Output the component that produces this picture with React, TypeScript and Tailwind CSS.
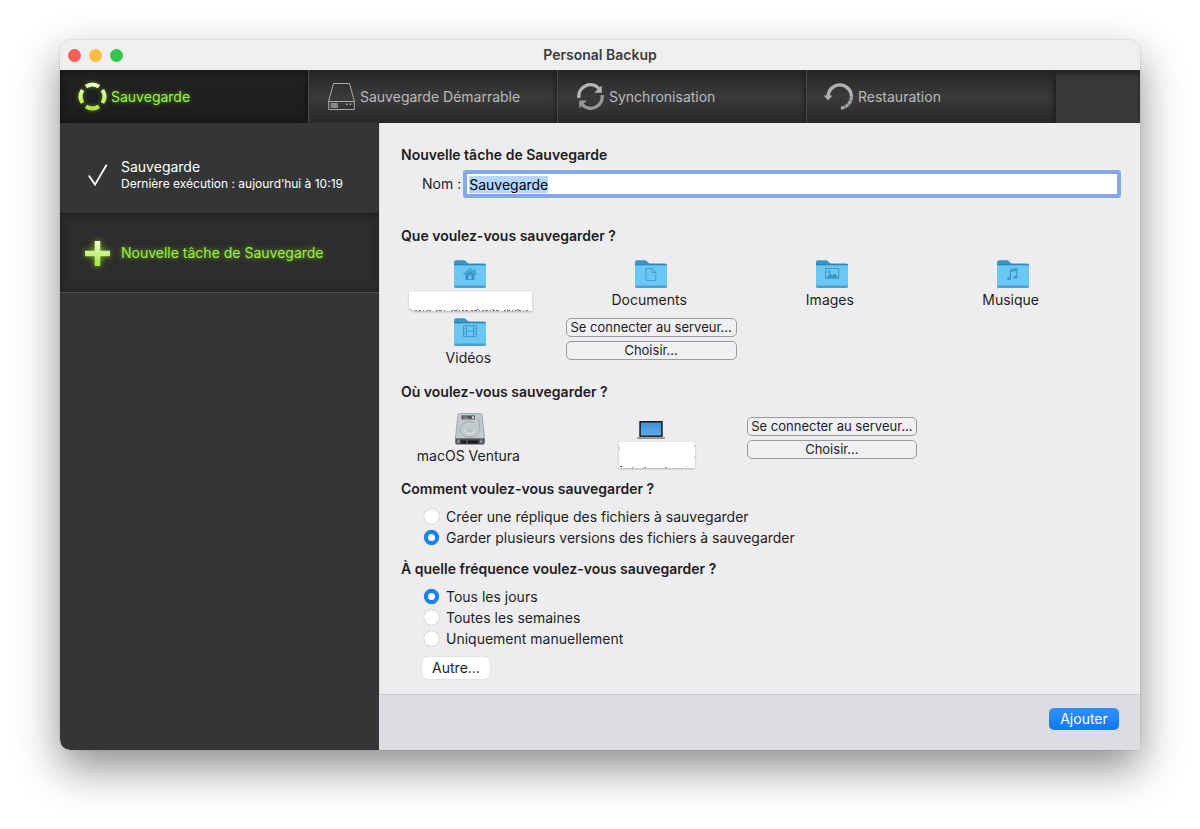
import { ReactNode, useEffect, useRef, useState } from "react";
import { clsx } from "clsx";

/* ---------- Toolbar icons ---------- */

const BackupIcon = () => (
  <svg width="27" height="27" viewBox="0 0 27 27" fill="none" className="shrink-0 overflow-visible drop-shadow-[0_0_2px_#4c9414]">
    <defs>
      <linearGradient id="ring" gradientUnits="userSpaceOnUse" x1="0" y1="0" x2="0" y2="27">
        <stop offset="0" stopColor="#f6ffd4" />
        <stop offset="1" stopColor="#b4e63c" />
      </linearGradient>
    </defs>
    <g stroke="url(#ring)" strokeWidth="4">
      <path d="M7 3.600A11.800 11.800 0 0 1 20 3.600" />
      <path d="M23.400 7A11.800 11.800 0 0 1 23.400 20" />
      <path d="M20 23.400A11.800 11.800 0 0 1 7 23.400" />
      <path d="M3.600 20A11.800 11.800 0 0 1 3.600 7" />
    </g>
  </svg>
);

const BootDriveIcon = () => (
  <svg width="27" height="27" viewBox="0 0 27 27" fill="none" stroke="#a9a9a9" className="shrink-0">
    <path d="M5.500.5h16l4.800 17.500v8.500H.7V18z" />
    <path d="M.7 18.500h25.600" />
    <path d="M3 20.500h6.500v4H3z" fill="#7b7b7b" stroke="#8a8a8a" />
    <path d="M5 20.500v4M7.500 20.500v4" opacity=".6" />
    <path d="M18 21.300h1.600M21.600 21.300h1.600" strokeWidth="1.600" />
  </svg>
);

const SyncIcon = () => (
  <svg width="27" height="27" viewBox="0 0 27 27" fill="none" className="shrink-0">
    <path d="M1.900 15A11.600 11.600 0 0 1 21.800 5.400" stroke="#b5b5b5" strokeWidth="3.400" />
    <path d="M24.800 2.400v7.400h-7.600z" fill="#b5b5b5" />
    <path d="M25.100 12A11.600 11.600 0 0 1 5.200 21.600" stroke="#979797" strokeWidth="3.400" />
    <path d="M2.200 25.200v-7.600h7.600z" fill="#979797" />
  </svg>
);

const RestoreIcon = () => (
  <svg width="27" height="27" viewBox="0 0 27 27" fill="none" className="shrink-0 overflow-visible">
    <path d="M2.200 13.500A11.600 11.600 0 0 1 25.400 13.500" stroke="#b0b0b0" strokeWidth="3.400" />
    <path d="M25.400 13.300A11.600 11.600 0 0 1 14.500 25.100" stroke="#a0a0a0" strokeWidth="3.400" strokeDasharray="4 .4" />
    <path d="M-2.400 12.400h8.800L2.200 17.600z" fill="#b0b0b0" />
  </svg>
);

/* ---------- Finder icons ---------- */

const Folder = ({ children }: { children: ReactNode }) => (
  <svg width="32" height="30" viewBox="0 0 32 30" fill="none">
    <path d="M0 2.200Q0 .3 2 .3h7.600q1.400 0 2.400 1l1.400 1.400q.8.7 2 .7H30q2 0 2 2V10H0z" fill="#3b94c2" />
    <path d="M0 5h32v21q0 2-2 2H2q-2 0-2-2z" fill="#6bc8f4" />
    <path d="M0 4.800h32" stroke="#2583b3" />
    <path d="M0 25.400V26q0 2 2 2h28q2 0 2-2v-.6z" fill="#4f9fc8" />
    <g stroke="#3f96c4" fill="none">{children}</g>
  </svg>
);

const HomeGlyph = () => (
  <>
    <path d="M9.400 14.800 16 8.800l6.600 6M20.600 9v3" strokeWidth="1.300" />
    <path d="M11.400 14.400 16 10.400l4.600 4V20h-9.200z" fill="#3a94c5" stroke="none" />
    <path d="M14.600 15.200h2.800V19h-2.800z" fill="#6bcaf7" stroke="none" />
  </>
);

const DocumentGlyph = () => <path d="M11 8.500h6.200l3.600 3.700v8.300H11zM17 8.500v4h4" strokeWidth=".9" />;

const ImageGlyph = () => (
  <>
    <path d="M9.500 8.500h13.200v9.800H9.500z" />
    <path d="m10 18 4-4.400 2.400 2 2.200-1.800 4 4.200z" fill="#3a94c5" stroke="none" />
    <circle cx="13" cy="11.600" r="1.200" />
  </>
);

const MusicGlyph = () => (
  <>
    <path d="M13.400 18.400V10l6.400-1.400V17M13.400 11.600l6.400-1.400" strokeWidth="1.200" />
    <ellipse cx="11.900" cy="18.700" rx="1.900" ry="1.400" fill="#3a94c5" stroke="none" />
    <ellipse cx="18.300" cy="17.300" rx="1.900" ry="1.400" fill="#3a94c5" stroke="none" />
  </>
);

const VideoGlyph = () => (
  <>
    <path d="M9.500 7.800h13v10.800h-13zM12.500 7.800v10.800M19.500 7.800v10.800M12.500 13.200h7" strokeWidth=".9" />
    <path d="M9.500 10.500h3M9.500 13.200h3M9.500 15.900h3M19.500 10.500h3M19.500 13.200h3M19.500 15.900h3" strokeWidth=".7" />
  </>
);

const HardDiskIcon = () => (
  <svg width="32" height="33" viewBox="0 0 32 33" fill="none">
    <path d="M4 1.800Q4.200.6 5.500.6h21q1.300 0 1.500 1.200l2.600 23.700H1.400z" fill="#c3cacc" stroke="#92989b" strokeWidth=".8" />
    <path d="M1.300 25.400h29.400v4.400q0 1.600-1.600 1.600H2.900q-1.600 0-1.600-1.600z" fill="#4c4f52" />
    <path d="M3 26.500h2.500v3.500H3zM26 26.500h2.500v3.500H26z" fill="#8b8f92" />
    <path d="M7 27.500h5v3H7zM14 27.500h10v3H14z" fill="#191b1d" />
    <path d="M7.500 2.400h13.500v4H7.500z" fill="#4f5356" />
    <path d="M9 4h4M9 5.300h6" stroke="#c3c9cc" strokeWidth=".5" />
    <circle cx="19" cy="4.400" r="1.200" fill="#e4e8ea" />
    <path d="M20.500 9.500A10 7.800 0 1 0 26 16.500L24.500 4" stroke="#9ba2a6" strokeWidth=".8" />
    <path d="M11 16.500a5 4 0 0 0 10 .5" stroke="#eef1f2" strokeWidth=".8" />
    <path d="M14 16.200a2 1.600 0 0 0 4.200.2" stroke="#9aa1a5" strokeWidth=".7" />
  </svg>
);

const LaptopIcon = () => (
  <svg width="28" height="20" viewBox="0 0 28 20" fill="none">
    <defs>
      <linearGradient id="screen" x1="0" y1="0" x2="0" y2="1">
        <stop offset="0" stopColor="#3f8fd6" />
        <stop offset="1" stopColor="#62aae8" />
      </linearGradient>
    </defs>
    <path d="M2.300 1h23.400v16H2.300z" fill="#12171e" />
    <path d="M3.800 2.500h20.400v13H3.800z" fill="url(#screen)" />
    <path d="M0 17h28v.8q0 1.200-1.500 1.200h-25Q0 19 0 17.800z" fill="#8d8f96" />
    <path d="M0 17.300h28" stroke="#c9b7a9" strokeWidth=".6" />
  </svg>
);

/* ---------- Building blocks ---------- */

const Heading = ({ children, className }: { children: ReactNode; className?: string }) => (
  <h2 className={clsx("ml-[21px] text-sm leading-5 font-semibold", className)}>{children}</h2>
);

const Item = ({ icon, label }: { icon: ReactNode; label: string }) => (
  <button type="button" className="flex flex-col items-center">
    {icon}
    <span className="pr-1 text-sm leading-5">{label}</span>
  </button>
);

const PickButtons = () => (
  <div className="flex flex-col gap-1 px-[5px]">
    {["Se connecter au serveur...", "Choisir..."].map((text) => (
      <button
        key={text}
        type="button"
        className="h-[19px] rounded-[5px] border border-[#9b9b9f] bg-[#f0f0f3] text-[13px] leading-[17px] whitespace-nowrap"
      >
        {text}
      </button>
    ))}
  </div>
);

type RadioGroupProps = {
  name: string;
  options: string[];
  value: string;
  onChange: (value: string) => void;
};

const RadioGroup = ({ name, options, value, onChange }: RadioGroupProps) => (
  <div className="mt-[7px] ml-[44px] flex flex-col items-start">
    {options.map((option) => (
      <label key={option} className="flex h-[21px] items-center gap-[7px] text-sm">
        <input
          type="radio"
          name={name}
          checked={option === value}
          onChange={() => onChange(option)}
          className="size-[15px] appearance-none rounded-full bg-white shadow-[0_0_1px_rgba(0,0,0,0.45)] checked:border-4 checked:border-[#187ff5]"
        />
        {option}
      </label>
    ))}
  </div>
);

const tabs = [
  { label: "Sauvegarde", icon: <BackupIcon /> },
  { label: "Sauvegarde Démarrable", icon: <BootDriveIcon /> },
  { label: "Synchronisation", icon: <SyncIcon /> },
  { label: "Restauration", icon: <RestoreIcon /> },
];

const TitleBar = () => (
  <header className="grid h-[30px] grid-cols-[1fr_auto_1fr] items-center bg-[#efeff0] px-2">
    <div className="flex gap-2">
      <button type="button" aria-label="Fermer" className="size-[13px] rounded-full bg-[#f65f58]" />
      <button type="button" aria-label="Réduire" className="size-[13px] rounded-full bg-[#fabb40]" />
      <button type="button" aria-label="Agrandir" className="size-[13px] rounded-full bg-[#32c748]" />
    </div>
    <h1 className="text-sm font-semibold text-[#3c3c3c]">Personal Backup</h1>
  </header>
);

const Toolbar = () => (
  <nav className="flex h-[53px] bg-[#38393a] shadow-[inset_0_4px_4px_#242526]">
    {tabs.map((tab, i) => (
      <button
        key={tab.label}
        type="button"
        className={clsx(
          "flex w-[249px] items-center gap-[5px] border-r pl-[19px] text-sm last:border-[#232324]",
          i === 0
            ? "border-[#4a4a4a] bg-linear-to-b from-[#222223] to-[#1c1c1d] text-[#a0ec4a] shadow-[inset_0_0_6px_#111] text-shadow-[0_0_4px_#5cb01a]"
            : "border-[#48484a] bg-linear-to-b from-[#262627] via-[#3a3a3c] to-[#2a2a2b] text-[#bababa] shadow-[inset_-4px_0_4px_-2px_#222223]"
        )}
      >
        {tab.icon}
        {tab.label}
      </button>
    ))}
  </nav>
);

const Sidebar = () => (
  <aside className="w-[319px] shrink-0 rounded-bl-[10px] bg-[#343635] text-white">
    <button type="button" className="flex h-[90px] w-full items-center gap-[14px] pt-[14px] pl-7 text-left">
      <svg width="19" height="23" viewBox="0 0 19 23" fill="none" stroke="#fff" strokeWidth="1.800" className="shrink-0">
        <path d="M.8 11.600 7 20.600 18.600.8" />
      </svg>
      <span className="flex flex-col">
        <span className="text-sm leading-[17px]">Sauvegarde</span>
        <span className="text-xs leading-[17px]">Dernière exécution : aujourd’hui à 10:19</span>
      </span>
    </button>
    <button
      type="button"
      className="flex h-[80px] w-full items-center gap-[11px] border-t border-b border-t-[#1c1c1c] border-b-[#4d4f4e] bg-[#2d2c2c] pl-[25px] text-sm text-[#a0ec4a] shadow-[inset_0_0_8px_#212121] text-shadow-[0_0_5px_#6cc41e]"
    >
      <svg
        width="25"
        height="25"
        viewBox="0 0 25 25"
        className="shrink-0 overflow-visible drop-shadow-[0_0_3px_#6cc41e]"
      >
        <defs>
          <linearGradient id="plus" x1="0" y1="0" x2="0" y2="1">
            <stop offset="0" stopColor="#f2ffca" />
            <stop offset="1" stopColor="#a6e245" />
          </linearGradient>
        </defs>
        <path d="M9.700 0h5.600v9.700H25v5.600h-9.700V25H9.700v-9.700H0V9.700h9.700z" fill="url(#plus)" />
      </svg>
      Nouvelle tâche de Sauvegarde
    </button>
  </aside>
);

const App = () => {
  const nameRef = useRef<HTMLInputElement>(null);
  const [name, setName] = useState("Sauvegarde");
  const [mode, setMode] = useState("Garder plusieurs versions des fichiers à sauvegarder");
  const [frequency, setFrequency] = useState("Tous les jours");

  // The name is ready to be typed over when the form opens
  useEffect(() => {
    nameRef.current?.focus();
    nameRef.current?.select();
  }, []);

  return (
    <div className="min-h-screen bg-white px-[60px] pt-10 pb-[79px] font-[Inter,sans-serif] text-[#1d1d1f]">
      <div className="overflow-hidden rounded-t-[10px] rounded-bl-[10px] shadow-[0_0_1px_rgba(0,0,0,0.5),0_18px_44px_rgba(0,0,0,0.45)]">
        <TitleBar />
        <Toolbar />
        <div className="flex">
          <Sidebar />

          <main className="flex min-w-0 flex-1 flex-col bg-[#ededf0]">
            <form onSubmit={(e) => e.preventDefault()} className="flex flex-1 flex-col">
              <div className="flex-1 border-l border-[#dcdcde] pt-[22px] pb-[15px]">
                <Heading>Nouvelle tâche de Sauvegarde</Heading>
                <div className="mt-[5px] mr-[19px] ml-[42px] flex items-center gap-[2px] text-sm">
                  <label htmlFor="task-name">Nom :</label>
                  <input
                    ref={nameRef}
                    id="task-name"
                    type="text"
                    value={name}
                    onChange={(e) => setName(e.target.value)}
                    className="h-7 min-w-0 flex-1 rounded-[3px] border-4 border-[#85a9e6] bg-white px-[2px] leading-[18px] text-black outline-none selection:bg-[#b3d7ff] selection:text-black"
                  />
                </div>

                <Heading className="mt-7">Que voulez-vous sauvegarder ?</Heading>
                <div className="mt-[14px] mr-[37px] grid grid-cols-4 gap-y-[6px]">
                  <button type="button" aria-label="Dossier de départ" className="flex flex-col items-center gap-[2px]">
                    <Folder><HomeGlyph /></Folder>
                    <svg width="123" height="20" viewBox="0 0 123 20" className="drop-shadow-[0_1px_1px_rgba(0,0,0,0.25)]">
                      <path d="M0 0h123v19H6l-6-3z" fill="#fff" />
                      <path d="M6 18.500h16M27 18.500h9M42 18.500h17M62 18.500h30M95 18.500h24" stroke="#777" strokeDasharray="2 1 3 2 1 2" />
                      <path d="M48 17.500h1M67 17.500h3M83 17.500h2M98 17.500h1M108 17.500h2" stroke="#999" />
                    </svg>
                  </button>
                  <Item label="Documents" icon={<Folder><DocumentGlyph /></Folder>} />
                  <Item label="Images" icon={<Folder><ImageGlyph /></Folder>} />
                  <Item label="Musique" icon={<Folder><MusicGlyph /></Folder>} />
                  <Item label="Vidéos" icon={<Folder><VideoGlyph /></Folder>} />
                  <PickButtons />
                </div>

                <Heading className="mt-[14px]">Où voulez-vous sauvegarder ?</Heading>
                <div className="mt-[11px] mr-[37px] grid grid-cols-4">
                  <Item label="macOS Ventura" icon={<HardDiskIcon />} />
                  <button type="button" aria-label="Ordinateur" className="flex flex-col items-center gap-[2px] pt-[7px]">
                    <LaptopIcon />
                    <svg width="76" height="27" viewBox="0 0 76 27" className="ml-[11px] drop-shadow-[0_1px_1px_rgba(0,0,0,0.25)]">
                      <path d="M0 0h76v26H0z" fill="#fff" />
                      <path d="M1 24.500h2" stroke="#444" />
                      <path d="M13 25.500h1M25 25.500h2M46 25.500h2M67 24.500h1" stroke="#888" />
                      <path d="M.5 5v3M75.500 3v2M75.500 14v2" stroke="#ccc" />
                    </svg>
                  </button>
                  <div className="pt-1">
                    <PickButtons />
                  </div>
                </div>

                <Heading className="mt-[10px]">Comment voulez-vous sauvegarder ?</Heading>
                <RadioGroup
                  name="mode"
                  options={[
                    "Créer une réplique des fichiers à sauvegarder",
                    "Garder plusieurs versions des fichiers à sauvegarder",
                  ]}
                  value={mode}
                  onChange={setMode}
                />

                <Heading className="mt-[11px]">À quelle fréquence voulez-vous sauvegarder ?</Heading>
                <RadioGroup
                  name="frequency"
                  options={["Tous les jours", "Toutes les semaines", "Uniquement manuellement"]}
                  value={frequency}
                  onChange={setFrequency}
                />
                <button
                  type="button"
                  className="mt-2 ml-[42px] block h-[22px] w-[68px] rounded-[5px] bg-white text-sm leading-[22px] shadow-[0_0_1px_rgba(0,0,0,0.4)]"
                >
                  Autre...
                </button>
              </div>

              <footer className="flex h-14 items-start justify-end border-t border-[#c9c8cc] bg-[#dddce0] pt-[13px] pr-[21px]">
                <button
                  type="submit"
                  className="h-[22px] w-[70px] rounded-[5px] bg-linear-to-b from-[#3091fd] to-[#0f78f8] text-sm leading-[22px] text-white"
                >
                  Ajouter
                </button>
              </footer>
            </form>
          </main>
        </div>
      </div>
    </div>
  );
};

export default App;
